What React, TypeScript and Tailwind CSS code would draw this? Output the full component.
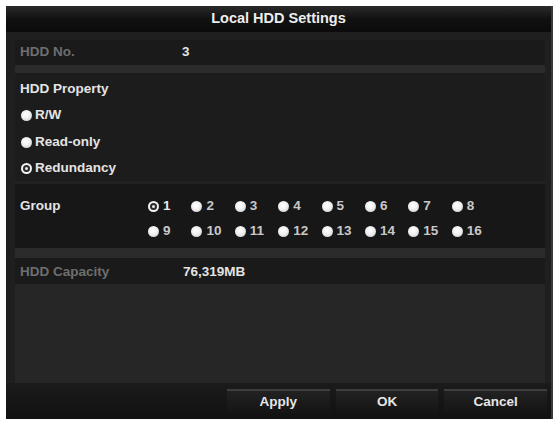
import React from "react";

const font = { fontFamily: '"Liberation Sans", Arial, sans-serif' };

function Radio({ checked }: { checked?: boolean }) {
  if (checked) {
    return (
      <span className="flex h-[11px] w-[11px] shrink-0 items-center justify-center rounded-full bg-[#f2f2f2]">
        <span className="flex h-[7px] w-[7px] items-center justify-center rounded-full bg-[#2a2a2a]">
          <span className="h-[3px] w-[3px] rounded-full bg-[#e8e8e8]" />
        </span>
      </span>
    );
  }
  return (
    <span className="h-[11px] w-[11px] shrink-0 rounded-full bg-[radial-gradient(circle_at_45%_40%,#ffffff_0%,#f0f0f0_45%,#bdbdbd_100%)]" />
  );
}

export default function App() {
  const groups = Array.from({ length: 16 }, (_, i) => i + 1);
  return (
    <div className="h-[421px] w-[559px] bg-white pl-[6px] pt-[6px]" style={font}>
      <div className="flex h-[413px] w-[547px] flex-col bg-[#1f1f1f] text-[13.5px] font-bold text-[#e4e4e4] border-r-2 border-[#3a3a3a]">
        {/* Title bar */}
        <div className="flex h-[26px] items-center justify-center bg-gradient-to-b from-[#2a2a2a] via-[#111111] to-[#0b0b0b] text-[14.5px] text-[#ededed]">
          Local HDD Settings
        </div>

        <div className="flex flex-1 flex-col pl-[9px] pr-[6px] pt-[8px]">
          {/* HDD No */}
          <div className="flex h-[25px] items-center bg-[#1a1a1a]">
            <div className="w-[167px] pl-[5px] text-[#6e6e6e]">HDD No.</div>
            <div>3</div>
          </div>
          <div className="h-[8px] bg-[#2b2b2b]" />

          <div className="flex flex-col bg-[#1c1c1c] pt-[3px]">
            <div className="flex h-[26px] items-center pl-[5px]">HDD Property</div>
            <div className="flex h-[27px] items-center gap-[3px] pl-[6px]">
              <Radio />
              <span>R/W</span>
            </div>
            <div className="flex h-[26px] items-center gap-[3px] pl-[6px]">
              <Radio />
              <span>Read-only</span>
            </div>
            <div className="flex h-[26px] items-center gap-[3px] pl-[6px]">
              <Radio checked />
              <span>Redundancy</span>
            </div>
          </div>
          <div className="h-[3px] bg-[#222222]" />

          {/* Group */}
          <div className="flex h-[64px] items-start bg-[#171717] pt-[14px]">
            <div className="w-[133px] pl-[5px] leading-[16px]">Group</div>
            <div className="grid w-[347px] grid-cols-8 content-start gap-y-[9px]">
              {groups.map((g) => (
                <div key={g} className="flex h-[16px] items-center gap-[4px]">
                  <Radio checked={g === 1} />
                  <span className={g === 1 ? "text-[#e8e8e8]" : "text-[#c8c8c8]"}>{g}</span>
                </div>
              ))}
            </div>
          </div>
          <div className="h-[10px] bg-[#2b2b2b]" />

          {/* HDD Capacity */}
          <div className="flex h-[26px] items-center bg-[#1a1a1a] pt-[2px]">
            <div className="w-[168px] pl-[5px] text-[#6e6e6e]">HDD Capacity</div>
            <div>76,319MB</div>
          </div>

          <div className="flex-1 bg-[#262626]" />
        </div>

        {/* Bottom bar */}
        <div className="flex h-[36px] items-start gap-[6px] bg-gradient-to-b from-[#1b1b1b] to-[#111111] pl-[221px] pt-[6px] pr-[4px]">
          {["Apply", "OK", "Cancel"].map((b) => (
            <div
              key={b}
              className="flex h-[24px] w-[105px] items-center justify-center border-t-2 border-[#3e3e3e] bg-gradient-to-b from-[#222222] to-[#141414] text-[#e6e6e6]"
            >
              {b}
            </div>
          ))}
        </div>
      </div>
    </div>
  );
}
